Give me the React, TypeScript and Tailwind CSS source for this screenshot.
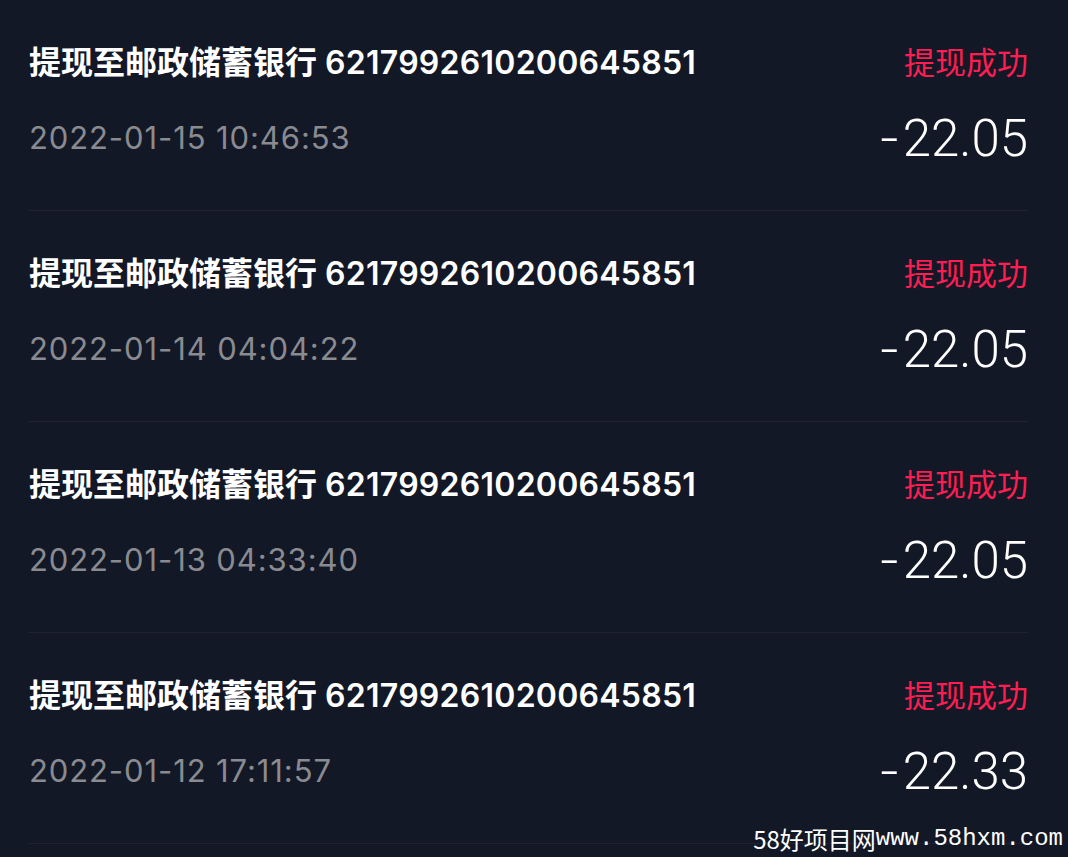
const records = [
  { account: "6217992610200645851", time: "2022-01-15 10:46:53", amount: "22.05" },
  { account: "6217992610200645851", time: "2022-01-14 04:04:22", amount: "22.05" },
  { account: "6217992610200645851", time: "2022-01-13 04:33:40", amount: "22.05" },
  { account: "6217992610200645851", time: "2022-01-12 17:11:57", amount: "22.33" },
];

const WithdrawRow = ({ account, time, amount }: { account: string; time: string; amount: string }) => {
  return (
    <div className="border-b border-[#1f2331]">
      <div className="flex justify-between items-center h-[40px] mt-[43px]">
        <span className="text-[32px] font-semibold text-white">
          提现至邮政储蓄银行 <span className="tracking-[0.25px]">{account}</span>
        </span>
        <span className="text-[31px] text-[#ff1d52]">提现成功</span>
      </div>
      <div className="flex justify-between items-center h-[56px] mt-[28px] mb-[43px]">
        <span className="text-[31px] text-[#8a8b91] tracking-[0.9px] -mt-[1px]">{time}</span>
        <span className="text-[51px] font-light text-white flex items-center" style={{ fontFamily: "Roboto, sans-serif" }}>
          <span className="mr-[6px] scale-x-125">-</span>
          {amount}
        </span>
      </div>
    </div>
  );
};

export default function App() {
  return (
    <div
      className="relative w-[1068px] h-[857px] overflow-hidden bg-[#131826]"
      style={{ fontFamily: '"Inter", "Noto Sans CJK SC", sans-serif' }}
    >
      <div className="pl-[29px] pr-[40px]">
        {records.map((r, i) => (
          <WithdrawRow key={i} {...r} />
        ))}
      </div>
      {/* site watermark */}
      <div className="absolute right-[5px] bottom-[3px] text-[24px] leading-[30px] text-white flex items-end">
        <span style={{ fontFamily: '"Noto Sans CJK SC", sans-serif' }}>58好项目网</span>
        <span style={{ fontFamily: '"Liberation Mono", monospace' }}>www.58hxm.com</span>
      </div>
    </div>
  );
}
